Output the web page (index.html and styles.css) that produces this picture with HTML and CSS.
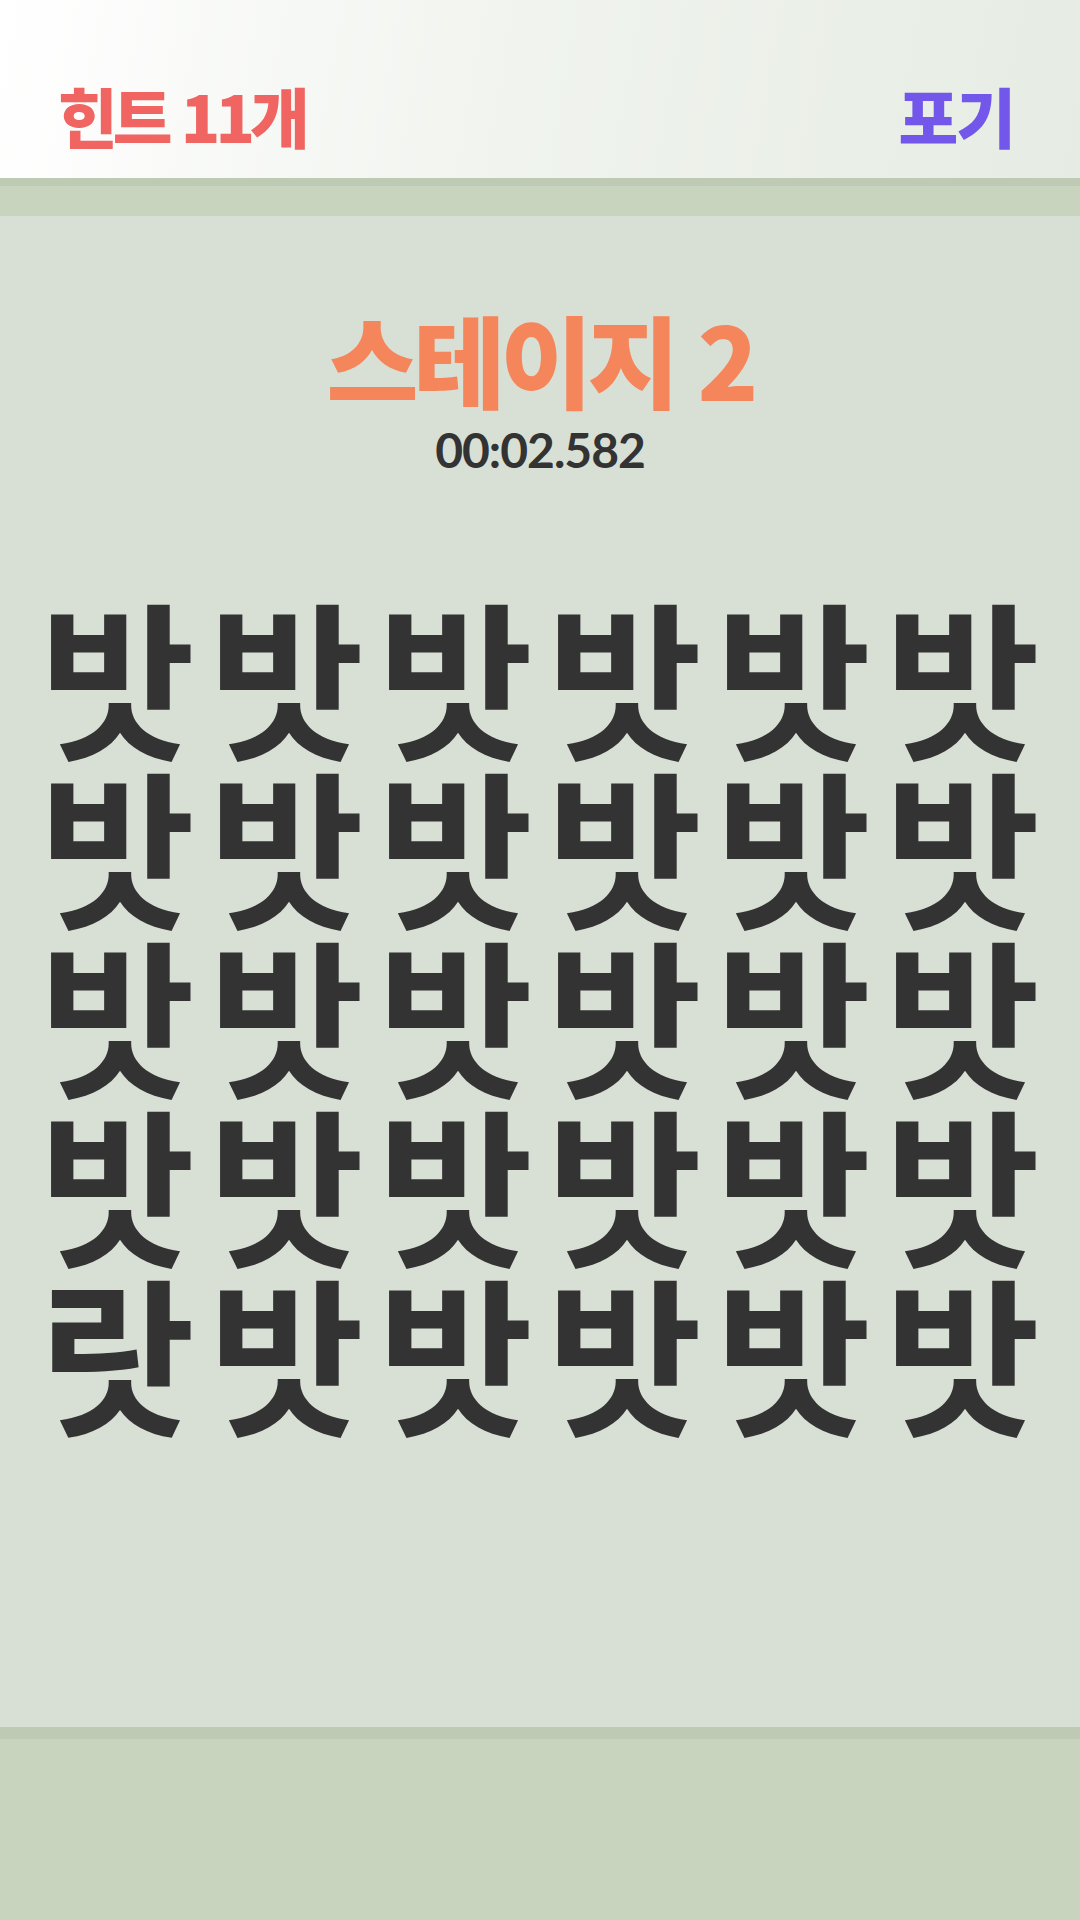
FILE: index.html
```html
<!DOCTYPE html>
<html lang="ko">
<head>
<meta charset="utf-8">
<link rel="stylesheet" href="styles.css">
</head>
<body>
<div class="app">
  <header class="header">
    <span class="hint">힌트 11개</span>
    <span class="giveup">포기</span>
  </header>
  <div class="strip"></div>
  <div class="band"></div>
  <main class="main">
    <h1 class="title">스테이지 2</h1>
    <div class="timer">00:02.582</div>
    <div class="grid">
      <span>밧</span><span>밧</span><span>밧</span><span>밧</span><span>밧</span><span>밧</span>
      <span>밧</span><span>밧</span><span>밧</span><span>밧</span><span>밧</span><span>밧</span>
      <span>밧</span><span>밧</span><span>밧</span><span>밧</span><span>밧</span><span>밧</span>
      <span>밧</span><span>밧</span><span>밧</span><span>밧</span><span>밧</span><span>밧</span>
      <span>랏</span><span>밧</span><span>밧</span><span>밧</span><span>밧</span><span>밧</span>
    </div>
  </main>
  <div class="footer-strip"></div>
  <footer class="footer"></footer>
</div>
</body>
</html>
```
FILE: styles.css
```css
html, body {
  margin: 0;
  padding: 0;
}
body {
  width: 1080px;
  height: 1920px;
  overflow: hidden;
  background: #c8d4bd;
  font-family: "Noto Sans CJK KR", "Noto Sans", sans-serif;
}
.app {
  display: flex;
  flex-direction: column;
  height: 1920px;
}
.header {
  height: 178px;
  box-sizing: border-box;
  padding: 52px 66px 0 58px;
  display: flex;
  justify-content: space-between;
  align-items: center;
  background: linear-gradient(100deg, #ffffff 0%, #f1f4ef 45%, #e6ece3 100%);
}
.hint {
  color: #f06461;
  font-size: 65px;
  font-weight: 900;
  letter-spacing: -5px;
  line-height: 1;
}
.giveup {
  color: #7257ea;
  font-size: 65px;
  font-weight: 900;
  letter-spacing: -2px;
  line-height: 1;
}
.strip {
  height: 8px;
  background: #bfcab5;
}
.band {
  height: 30px;
  background: #c8d4bd;
}
.main {
  height: 1511px;
  background: #d8e0d6;
  display: flex;
  flex-direction: column;
  align-items: center;
}
.title {
  margin: 85px 0 0 0;
  color: #f5865b;
  font-size: 100px;
  font-weight: 900;
  line-height: 114px;
  letter-spacing: -5px;
}
.timer {
  margin-top: 8px;
  color: #333333;
  font-family: Lato, "Noto Sans", sans-serif;
  font-size: 48px;
  font-weight: 700;
  letter-spacing: -1px;
  line-height: 54px;
}
.grid {
  margin-top: 112px;
  display: grid;
  grid-template-columns: repeat(6, 169px);
  grid-auto-rows: 169px;
}
.grid span {
  display: flex;
  align-items: center;
  justify-content: center;
  color: #333333;
  font-size: 169px;
  font-weight: 700;
  line-height: 169px;
}
.footer-strip {
  height: 12px;
  background: #bfcab5;
}
.footer {
  flex: 1;
  background: #c8d4bd;
}
```
